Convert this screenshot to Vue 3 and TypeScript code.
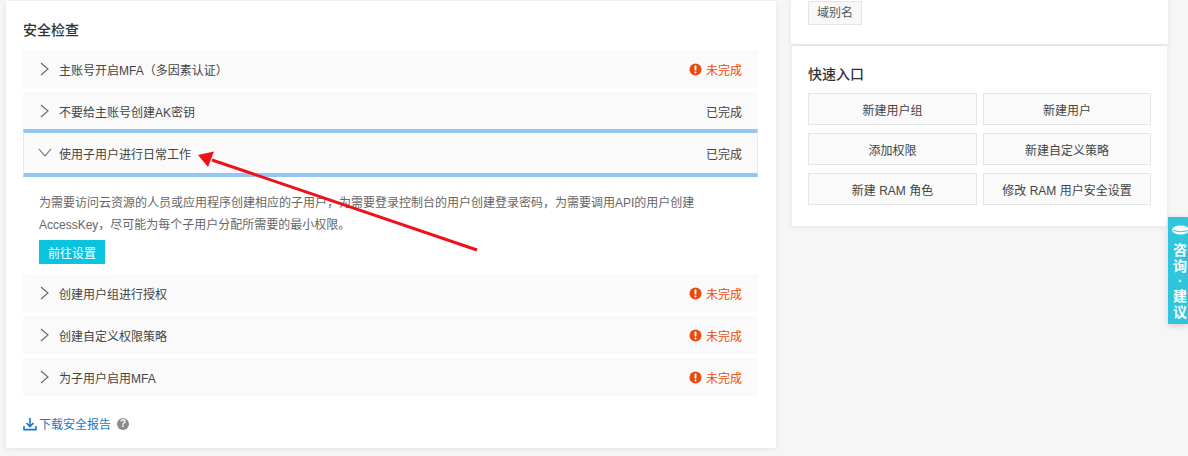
<script setup lang="ts">
interface Row { title: string; done: boolean }
const before: Row[] = [
  { title: '主账号开启MFA（多因素认证）', done: false },
  { title: '不要给主账号创建AK密钥', done: true },
]
const after: Row[] = [
  { title: '创建用户组进行授权', done: false },
  { title: '创建自定义权限策略', done: false },
  { title: '为子用户启用MFA', done: false },
]
const actions: string[] = ['新建用户组', '新建用户', '添加权限', '新建自定义策略', '新建 RAM 角色', '修改 RAM 用户安全设置']
</script>

<template>
  <div class="page">
    <section class="card main">
      <h2 class="title">安全检查</h2>
      <div class="rows">
        <div v-for="r in before" :key="r.title" class="row">
          <svg class="chev" width="12" height="14" viewBox="0 0 12 14"><path d="M2 1l7 6-7 6" /></svg>
          <span class="label">{{ r.title }}</span>
          <span v-if="!r.done" class="todo">
            <svg width="13" height="13" viewBox="0 0 13 13"><circle cx="6.5" cy="6.500" r="6" fill="#ea4a0e" /><rect x="5.6" y="2.6" width="1.8" height="5" rx=".6" fill="#fff" /><circle cx="6.5" cy="9.6" r="1" fill="#fff" /></svg>
            未完成
          </span>
          <span v-else class="done">已完成</span>
        </div>
        <div class="row open">
          <svg class="chev" width="14" height="12" viewBox="0 0 14 12"><path d="M1 2l6 7 6-7" /></svg>
          <span class="label">使用子用户进行日常工作</span>
          <span class="done">已完成</span>
        </div>
        <div class="detail">
          <p class="desc">为需要访问云资源的人员或应用程序创建相应的子用户，为需要登录控制台的用户创建登录密码，为需要调用API的用户创建AccessKey，尽可能为每个子用户分配所需要的最小权限。</p>
          <button class="go">前往设置</button>
        </div>
        <div v-for="r in after" :key="r.title" class="row">
          <svg class="chev" width="12" height="14" viewBox="0 0 12 14"><path d="M2 1l7 6-7 6" /></svg>
          <span class="label">{{ r.title }}</span>
          <span class="todo">
            <svg width="13" height="13" viewBox="0 0 13 13"><circle cx="6.5" cy="6.5" r="6" fill="#ea4a0e" /><rect x="5.6" y="2.6" width="1.8" height="5" rx=".6" fill="#fff" /><circle cx="6.5" cy="9.6" r="1" fill="#fff" /></svg>
            未完成
          </span>
        </div>
      </div>
      <div class="report">
        <svg width="14" height="14" viewBox="0 0 14 14" fill="none" stroke="#1a78c8" stroke-width="1.6"><path d="M7 1v8M3.5 6L7 9.5 10.5 6" /><path d="M1 9v3.6h12V9" /></svg>
        <a class="link">下载安全报告</a>
        <span class="help">?</span>
      </div>
    </section>

    <aside class="side">
      <div class="card tagcard"><span class="tag">域别名</span></div>
      <div class="card quick">
        <h2 class="title small">快速入口</h2>
        <div class="grid">
          <button v-for="a in actions" :key="a" class="act">{{ a }}</button>
        </div>
      </div>
    </aside>

    <svg class="arrow" width="300" height="110" viewBox="190 145 300 110">
      <path d="M477 250L212 160" stroke="#f0101a" stroke-width="3" fill="none" />
      <path d="M198 155L214 151.5L208 167Z" fill="#f0101a" />
    </svg>

    <div class="float">
      <svg width="18" height="10" viewBox="0 0 18 10"><ellipse cx="9.5" cy="5" rx="8.5" ry="4.5" fill="#fff" /><path d="M2 5.500q7 2.500 16 0" stroke="#2ec5dd" stroke-width="1" fill="none" /></svg>
      <span>咨</span><span>询</span><span class="dot">·</span><span>建</span><span>议</span>
    </div>
  </div>
</template>

<style>
html, body { margin: 0; background: #f6f6f7; overflow: hidden; }
</style>

<style scoped>
.page {
  position: relative;
  width: 1188px;
  height: 456px;
  box-sizing: border-box;
  display: flex;
  align-items: flex-start;
  gap: 15px;
  padding-left: 6px;
  font-family: "Liberation Sans", "Noto Sans CJK SC", sans-serif;
  font-size: 12px;
  color: #333;
  overflow: hidden;
}
.card { background: #fff; box-sizing: border-box; box-shadow: 0 1px 6px rgba(0, 0, 0, .08); }
.main { width: 770px; height: 447px; padding: 22px 17px 0; margin-top: 1px; }
.title { margin: 0; font-size: 14px; line-height: 14px; font-weight: 500; color: #333; }
.rows { margin-top: 13px; display: flex; flex-direction: column; gap: 4px; width: 735px; }
.row {
  height: 38px;
  background: #fafafa;
  box-sizing: border-box;
  display: flex;
  align-items: center;
  padding: 0 16px 0 15px;
}
.chev { width: 14px; fill: none; stroke: #666; stroke-width: 1.1; margin-right: 7px; flex: none; }
.label { flex: 1; color: #444; }
.done { color: #444; }
.todo { color: #ea4a0e; display: flex; align-items: center; gap: 4px; }
.open {
  height: 48px;
  margin-top: -5px;
  border: 1px solid #e8e8e8;
  border-top: 4px solid #93c6f5;
  border-bottom: 4px solid #93c6f5;
  padding: 0 15px 0 14px;
}
.detail { padding: 15px 16px 6px; margin-top: -4px; }
.desc { margin: 0; line-height: 22px; color: #666; width: 680px; }
.go {
  display: block;
  margin-top: 4px;
  width: 66px;
  height: 24px;
  border: 0;
  padding: 0;
  background: #0ac3df;
  color: #fff;
  font: inherit;
}
.report { margin-top: 19px; display: flex; align-items: center; }
.link { color: #1a78c8; margin-left: 2px; }
.help {
  margin-left: 6px;
  width: 12px;
  height: 12px;
  border-radius: 50%;
  background: #8a8a8a;
  color: #fff;
  font-size: 10px;
  font-weight: 700;
  line-height: 12px;
  text-align: center;
}
.side { width: 377px; display: flex; flex-direction: column; }
.tagcard { height: 45px; padding-left: 17px; border-bottom: 1px solid #ececec; }
.tag {
  display: block;
  width: 54px;
  height: 24px;
  margin-top: 1px;
  box-sizing: border-box;
  border: 1px solid #e5e5e5;
  background: #f8f8f8;
  text-align: center;
  line-height: 22px;
  color: #555;
}
.quick { margin: 1px 1px 0; height: 180px; padding: 21px 16px 0; }
.grid { margin-top: 12px; display: grid; grid-template-columns: 169px 168px; column-gap: 6px; row-gap: 8px; }
.act {
  height: 32px;
  border: 1px solid #e5e5e5;
  background: #fafafa;
  color: #444;
  font: inherit;
  padding: 0;
}
.arrow { position: absolute; left: 190px; top: 145px; }
.float {
  position: absolute;
  left: 1168px;
  top: 217px;
  width: 20px;
  height: 107px;
  background: #2ec5dd;
  color: #fff;
  font-size: 14px;
  font-weight: 700;
  line-height: 16px;
  display: flex;
  flex-direction: column;
  align-items: flex-start;
  padding: 8px 0 0 5px;
  box-sizing: border-box;
  box-shadow: 0 2px 6px rgba(0, 0, 0, .15);
  overflow: hidden;
}
.float svg { flex: none; margin: 0 0 7px -2px; }
.dot { width: 14px; text-align: center; line-height: 14px; }
</style>
